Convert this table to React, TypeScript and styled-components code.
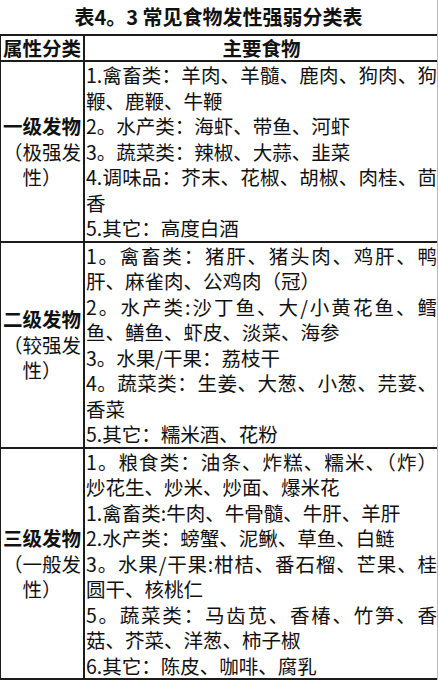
import React from "react";
import styled, { createGlobalStyle } from "styled-components";

const Global = createGlobalStyle`
  html, body {
    margin: 0;
    padding: 0;
    background: #ffffff;
  }
  body {
    font-family: "Noto Sans CJK SC", "Noto Sans", sans-serif;
    color: #111111;
  }
`;

const Table = styled.div`
  width: 438px;
  box-sizing: border-box;
  border-right: 1px solid #b8b8b8;
  font-size: 19.5px;
`;

const Title = styled.div`
  height: 34px;
  line-height: 34px;
  text-align: center;
  font-weight: 700;
  font-size: 20px;
  border-bottom: 2px solid #1c1c1c;
`;

const Row = styled.div<{ $height?: number }>`
  display: grid;
  grid-template-columns: 82px 1fr;
  border-left: 1px solid #1c1c1c;
  border-bottom: 2px solid #1c1c1c;
  ${(p) => (p.$height ? `height: ${p.$height}px;` : "")}
`;

const LabelCell = styled.div`
  display: flex;
  flex-direction: column;
  justify-content: center;
  align-items: stretch;
  text-align: center;
  line-height: 25.5px;
`;

const ContentCell = styled.div<{ $center?: boolean }>`
  border-left: 2px solid #1c1c1c;
  padding-left: 1px;
  line-height: 25.5px;
  display: flex;
  flex-direction: column;
  justify-content: center;
  ${(p) => (p.$center ? "text-align: center;" : "")}
`;

const HeadText = styled.div`
  font-weight: 700;
  line-height: 24px;
  white-space: nowrap;
`;

const LabelMain = styled.div`
  font-weight: 700;
  white-space: nowrap;
`;

const LabelSub = styled.div`
  font-weight: 400;
  white-space: nowrap;
`;

const Line = styled.div<{ $justify?: boolean }>`
  white-space: nowrap;
  ${(p) =>
    p.$justify
      ? "text-align: justify; text-align-last: justify; text-justify: inter-character;"
      : "text-align: left;"}
`;

type L = { t: string; j?: boolean };
type Tier = { name: string; sub: string[]; lines: L[] };

const tiers: Tier[] = [
  {
    name: "一级发物",
    sub: ["（极强发", "性）"],
    lines: [
      { t: "1.禽畜类：羊肉、羊髓、鹿肉、狗肉、狗", j: true },
      { t: "鞭、鹿鞭、牛鞭" },
      { t: "2。水产类：海虾、带鱼、河虾" },
      { t: "3。蔬菜类：辣椒、大蒜、韭菜" },
      { t: "4.调味品：芥末、花椒、胡椒、肉桂、茴", j: true },
      { t: "香" },
      { t: "5.其它：高度白酒" },
    ],
  },
  {
    name: "二级发物",
    sub: ["（较强发", "性）"],
    lines: [
      { t: "1。禽畜类：猪肝、猪头肉、鸡肝、鸭", j: true },
      { t: "肝、麻雀肉、公鸡肉（冠）" },
      { t: "2。水产类:沙丁鱼、大/小黄花鱼、鳕", j: true },
      { t: "鱼、鳝鱼、虾皮、淡菜、海参" },
      { t: "3。水果/干果：荔枝干" },
      { t: "4。蔬菜类：生姜、大葱、小葱、芫荽、", j: true },
      { t: "香菜" },
      { t: "5.其它：糯米酒、花粉" },
    ],
  },
  {
    name: "三级发物",
    sub: ["（一般发", "性）"],
    lines: [
      { t: "1。粮食类：油条、炸糕、糯米、（炸）", j: true },
      { t: "炒花生、炒米、炒面、爆米花" },
      { t: "1.禽畜类:牛肉、牛骨髓、牛肝、羊肝" },
      { t: "2.水产类：螃蟹、泥鳅、草鱼、白鲢" },
      { t: "3。水果/干果:柑桔、番石榴、芒果、桂", j: true },
      { t: "圆干、核桃仁" },
      { t: "5。蔬菜类：马齿苋、香椿、竹笋、香", j: true },
      { t: "菇、芥菜、洋葱、柿子椒" },
      { t: "6.其它：陈皮、咖啡、腐乳" },
    ],
  },
];

export default function App() {
  return (
    <>
      <Global />
      <Table>
        <Title>表4。3 常见食物发性强弱分类表</Title>
        <Row $height={24}>
          <LabelCell>
            <HeadText>属性分类</HeadText>
          </LabelCell>
          <ContentCell $center>
            <HeadText>主要食物</HeadText>
          </ContentCell>
        </Row>
        {tiers.map((tier) => (
          <Row key={tier.name}>
            <LabelCell>
              <LabelMain>{tier.name}</LabelMain>
              {tier.sub.map((s) => (
                <LabelSub key={s}>{s}</LabelSub>
              ))}
            </LabelCell>
            <ContentCell>
              {tier.lines.map((l, i) => (
                <Line key={i} $justify={l.j}>
                  {l.t}
                </Line>
              ))}
            </ContentCell>
          </Row>
        ))}
      </Table>
    </>
  );
}
